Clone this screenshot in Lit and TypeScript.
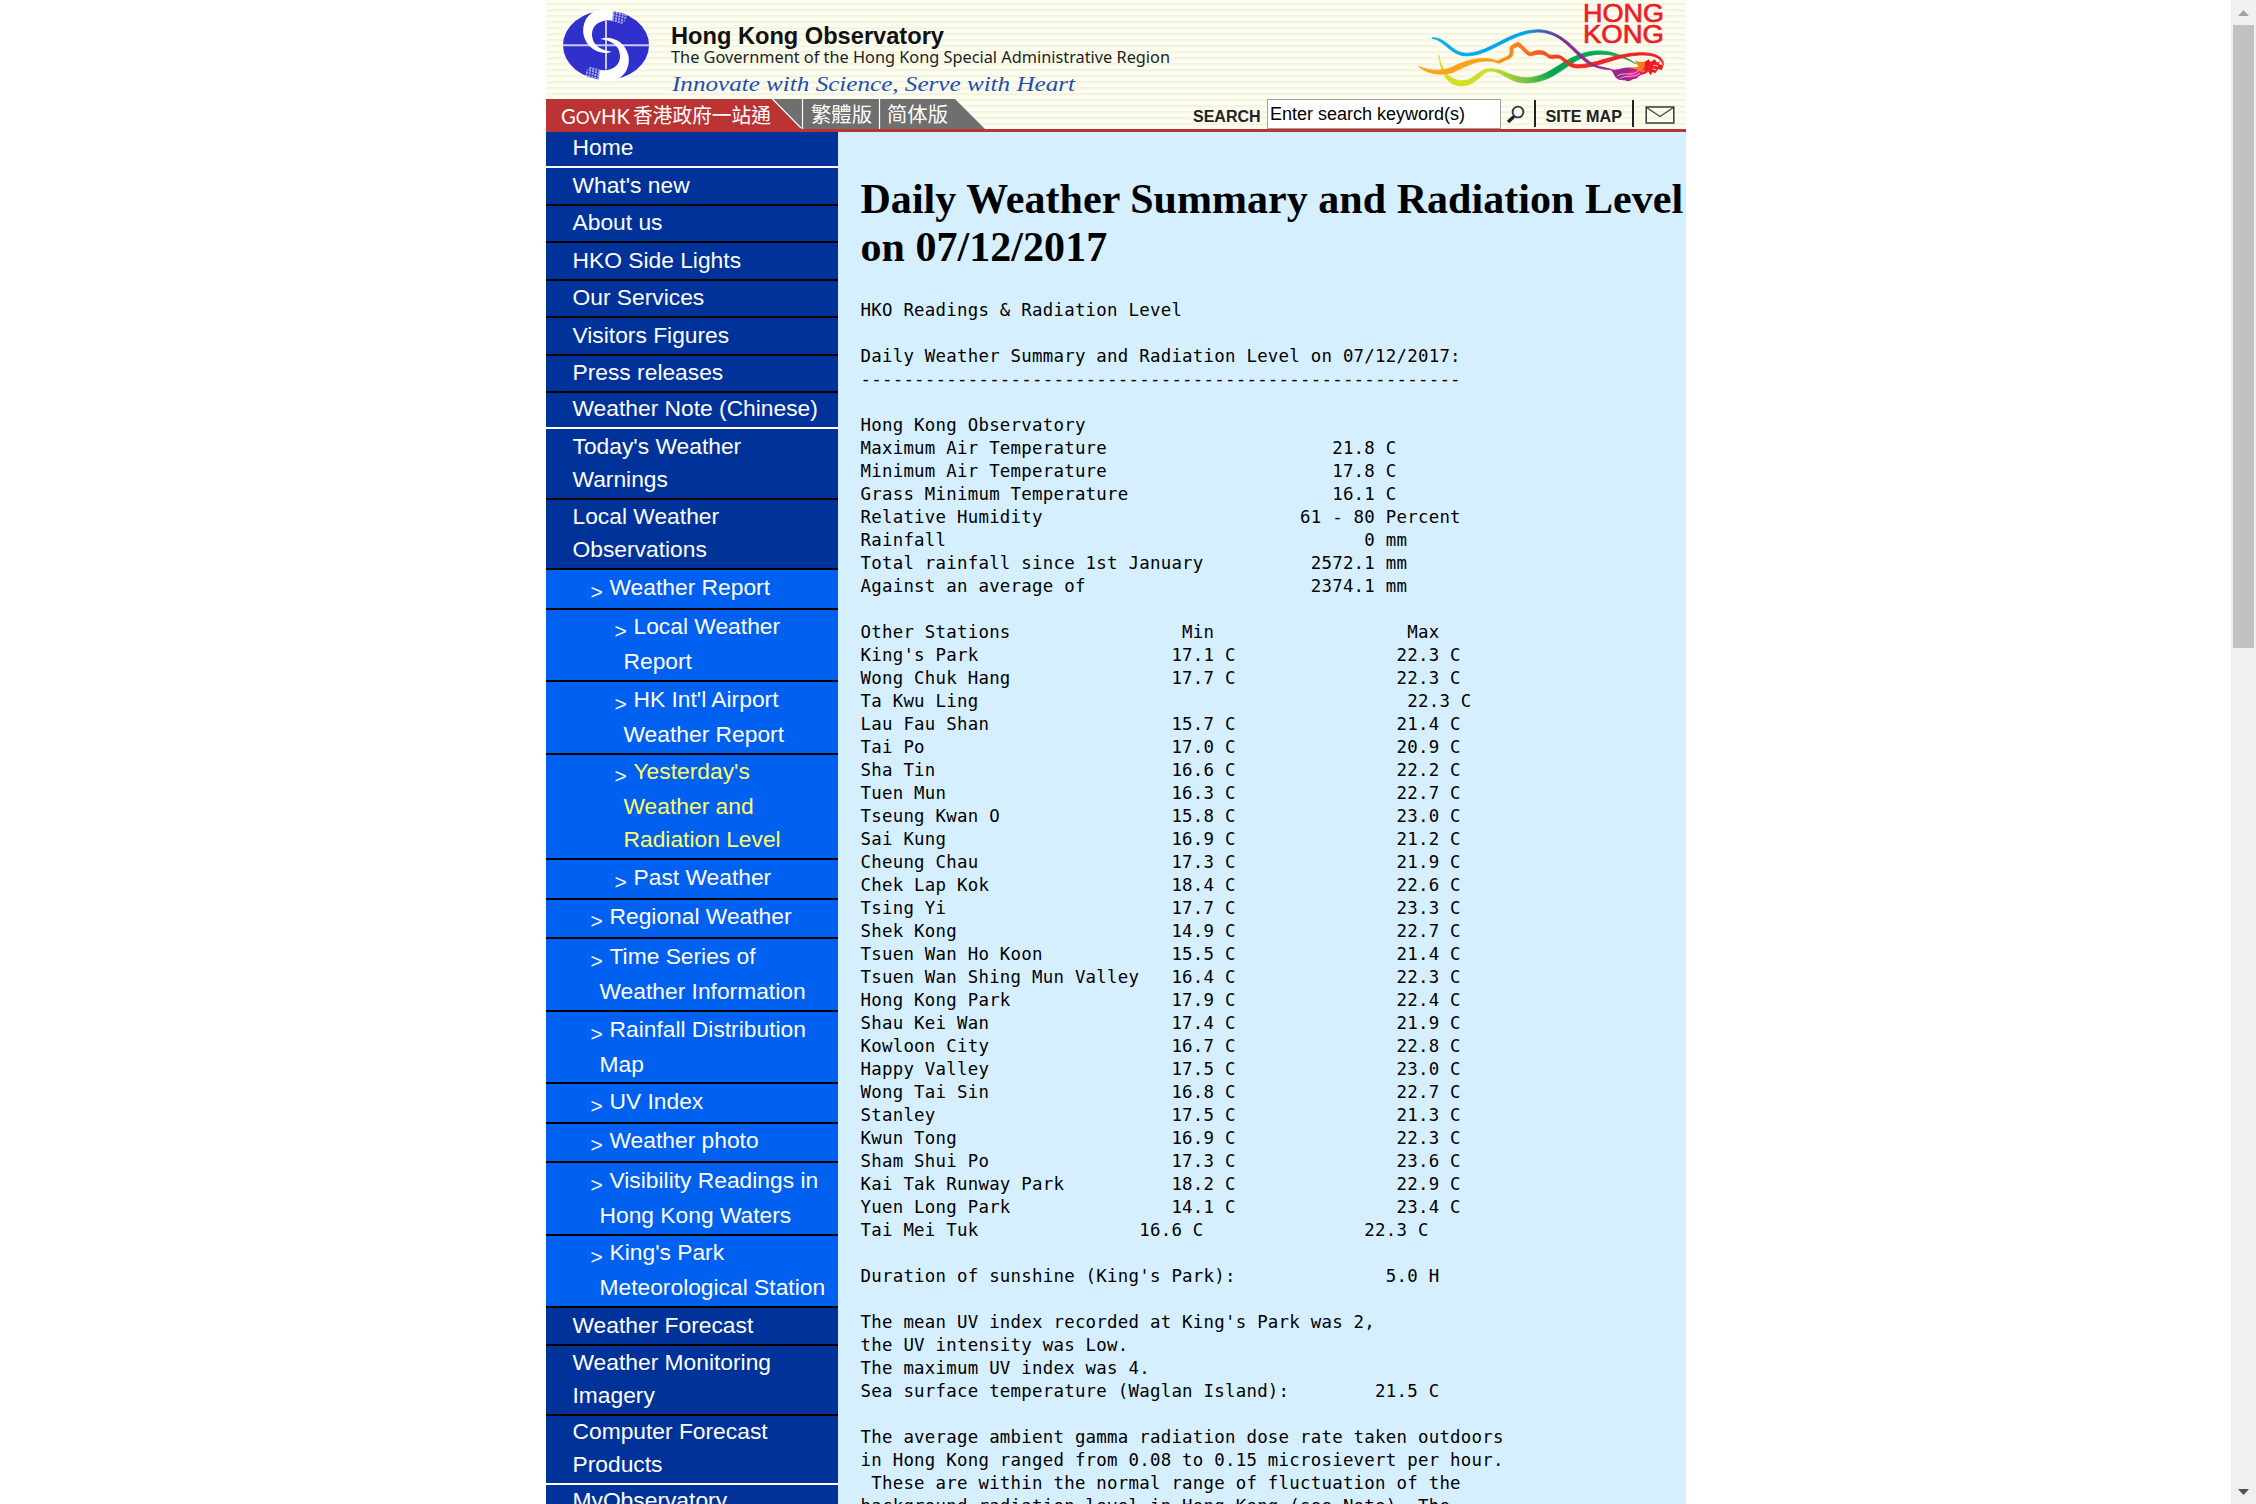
import { LitElement, html, svg, css } from "lit";
import { customElement } from "lit/decorators.js";
import { classMap } from "lit/directives/class-map.js";
import { styleMap } from "lit/directives/style-map.js";

interface NavItem {
  lines: string[];
  height: number;
  // space above the first line of text
  pad: number;
  level: 0 | 1 | 2;
  current?: boolean;
  // white rule closes a section, black rule separates entries
  sectionEnd?: boolean;
}

const item = (
  lines: string[],
  height: number,
  pad: number,
  level: 0 | 1 | 2 = 0,
  extra: Partial<NavItem> = {},
): NavItem => ({ lines, height, pad, level, ...extra });

const NAV: NavItem[] = [
  item(["Home"], 36, 0, 0, { sectionEnd: true }),
  item(["What's new"], 38, 2),
  item(["About us"], 37, 1),
  item(["HKO Side Lights"], 38, 2),
  item(["Our Services"], 37, 1),
  item(["Visitors Figures"], 38, 2),
  item(["Press releases"], 37, 1),
  item(["Weather Note (Chinese)"], 36, 0, 0, { sectionEnd: true }),
  item(["Today's Weather", "Warnings"], 71, 2),
  item(["Local Weather", "Observations"], 70, 1),
  item(["Weather Report"], 40, 2, 1),
  item(["Local Weather", "Report"], 72, 1, 2),
  item(["HK Int'l Airport", "Weather Report"], 73, 2, 2),
  item(["Yesterday's", "Weather and", "Radiation Level"], 105, 1, 2, { current: true }),
  item(["Past Weather"], 40, 2, 2),
  item(["Regional Weather"], 39, 1, 1),
  item(["Time Series of", "Weather Information"], 73, 2, 1),
  item(["Rainfall Distribution", "Map"], 72, 2, 1),
  item(["UV Index"], 40, 2, 1),
  item(["Weather photo"], 39, 1, 1),
  item(["Visibility Readings in", "Hong Kong Waters"], 73, 2, 1),
  item(["King's Park", "Meteorological Station"], 72, 1, 1),
  item(["Weather Forecast"], 38, 2),
  item(["Weather Monitoring", "Imagery"], 70, 1),
  item(["Computer Forecast", "Products"], 69, 0, 0, { sectionEnd: true }),
  item(["MyObservatory"], 38, 0),
];

// Places each text at its character column.
const cols = (...parts: [number, string][]) =>
  parts.reduce((line, [col, text]) => line.padEnd(col) + text, "");

const STATIONS: [string, string, string][] = [
  ["King's Park", "17.1", "22.3"],
  ["Wong Chuk Hang", "17.7", "22.3"],
  ["Ta Kwu Ling", "", "22.3"],
  ["Lau Fau Shan", "15.7", "21.4"],
  ["Tai Po", "17.0", "20.9"],
  ["Sha Tin", "16.6", "22.2"],
  ["Tuen Mun", "16.3", "22.7"],
  ["Tseung Kwan O", "15.8", "23.0"],
  ["Sai Kung", "16.9", "21.2"],
  ["Cheung Chau", "17.3", "21.9"],
  ["Chek Lap Kok", "18.4", "22.6"],
  ["Tsing Yi", "17.7", "23.3"],
  ["Shek Kong", "14.9", "22.7"],
  ["Tsuen Wan Ho Koon", "15.5", "21.4"],
  ["Tsuen Wan Shing Mun Valley", "16.4", "22.3"],
  ["Hong Kong Park", "17.9", "22.4"],
  ["Shau Kei Wan", "17.4", "21.9"],
  ["Kowloon City", "16.7", "22.8"],
  ["Happy Valley", "17.5", "23.0"],
  ["Wong Tai Sin", "16.8", "22.7"],
  ["Stanley", "17.5", "21.3"],
  ["Kwun Tong", "16.9", "22.3"],
  ["Sham Shui Po", "17.3", "23.6"],
  ["Kai Tak Runway Park", "18.2", "22.9"],
  ["Yuen Long Park", "14.1", "23.4"],
];

const REPORT = [
  "HKO Readings & Radiation Level",
  "",
  "Daily Weather Summary and Radiation Level on 07/12/2017:",
  "-".repeat(56),
  "",
  "Hong Kong Observatory",
  cols([0, "Maximum Air Temperature"], [44, "21.8 C"]),
  cols([0, "Minimum Air Temperature"], [44, "17.8 C"]),
  cols([0, "Grass Minimum Temperature"], [44, "16.1 C"]),
  cols([0, "Relative Humidity"], [41, "61 - 80 Percent"]),
  cols([0, "Rainfall"], [47, "0 mm"]),
  cols([0, "Total rainfall since 1st January"], [42, "2572.1 mm"]),
  cols([0, "Against an average of"], [42, "2374.1 mm"]),
  "",
  cols([0, "Other Stations"], [30, "Min"], [51, "Max"]),
  ...STATIONS.map(([name, min, max]) =>
    min ? cols([0, name], [29, `${min} C`], [50, `${max} C`]) : cols([0, name], [51, `${max} C`]),
  ),
  cols([0, "Tai Mei Tuk"], [26, "16.6 C"], [47, "22.3 C"]),
  "",
  cols([0, "Duration of sunshine (King's Park):"], [49, "5.0 H"]),
  "",
  "The mean UV index recorded at King's Park was 2,",
  "the UV intensity was Low.",
  "The maximum UV index was 4.",
  cols([0, "Sea surface temperature (Waglan Island):"], [48, "21.5 C"]),
  "",
  "The average ambient gamma radiation dose rate taken outdoors",
  "in Hong Kong ranged from 0.08 to 0.15 microsievert per hour.",
  " These are within the normal range of fluctuation of the",
  "background radiation level in Hong Kong (see Note). The",
].join("\n");

@customElement("hko-banner")
export class HkoBanner extends LitElement {
  static styles = css`
    :host {
      display: block;
      height: 132px;
      box-sizing: border-box;
      border-bottom: 3px solid #bb3333;
      background: repeating-linear-gradient(#fefeee 0 3px, #f4f4e4 3px 5px, #fafaea 5px 6px);
      font-family: "Liberation Sans", Arial, sans-serif;
    }
    .brand { display: block; width: 1140px; height: 99px; }
    .name { font: bold 23px "Liberation Sans", sans-serif; fill: #111; }
    .gov { font: 16.5px "Noto Sans", sans-serif; fill: #222; }
    .motto { font: italic 20px "Liberation Serif", serif; fill: #1f4fae; }
    .city { font: 26px "Liberation Sans", sans-serif; fill: #ee1c25; stroke: #ee1c25; stroke-width: 0.7px; }
    .bar { display: flex; height: 30px; }
    .tabs { display: block; width: 450px; height: 30px; flex: none; }
    .tab { font: 20px "Noto Sans CJK TC", sans-serif; fill: #fff; }
    .latin { font: 21px Lato, sans-serif; fill: #fff; }
    .simplified { font-family: "Noto Sans CJK SC", sans-serif; }
    .tools { display: flex; flex: 1; padding-left: 197px; }
    .tools > * { flex: none; }
    .label { font-size: 16px; line-height: 18px; font-weight: bold; color: #222; padding-top: 8px; white-space: nowrap; }
    .search { width: 74px; padding-top: 9px; }
    .field {
      box-sizing: border-box;
      width: 234px;
      height: 30px;
      border: 1.5px solid #a0a0a0;
      background: #fff;
      padding-left: 2px;
      font-size: 18px;
      line-height: 28px;
      color: #000;
      white-space: nowrap;
    }
    .lens { width: 19px; height: 20px; margin: 6px 9px 0 5px; }
    .rule { width: 1.5px; height: 27px; margin-top: 1px; background: #222; }
    .map { width: 96.5px; padding-left: 10px; box-sizing: border-box; font-size: 16.2px; }
    .mail { width: 30px; height: 19px; margin: 7px 0 0 11px; }
  `;

  private swirl() {
    return svg`
      <path fill="#fff" d="M202 31C165 22 135 33 120 58C103 90 112 124 138 145C156 159 180 162 197 155C168 151 139 138 138 105C137 80 155 63 185 61L200 62Z"/>
      <path fill="none" stroke="#aaaaf4" stroke-width="6" stroke-dasharray="6 3" d="M201 36L243 47M200 44L240 55M199 52L236 63M198 60L230 69"/>
    `;
  }

  private dragon() {
    return svg`
      <defs>
        <linearGradient id="blue" gradientUnits="userSpaceOnUse" x1="66" y1="0" x2="605" y2="0">
          <stop offset="0" stop-color="#00aeef"/><stop offset="0.52" stop-color="#00a4e8"/>
          <stop offset="0.62" stop-color="#3f5fb0"/><stop offset="0.72" stop-color="#7a2e91"/><stop offset="1" stop-color="#a0228f"/>
        </linearGradient>
        <linearGradient id="green" gradientUnits="userSpaceOnUse" x1="86" y1="0" x2="680" y2="0">
          <stop offset="0" stop-color="#d7df23"/><stop offset="0.25" stop-color="#cfdc28"/>
          <stop offset="0.44" stop-color="#7ac143"/><stop offset="0.58" stop-color="#00a651"/><stop offset="1" stop-color="#12a85a"/>
        </linearGradient>
        <linearGradient id="fire" gradientUnits="userSpaceOnUse" x1="26" y1="0" x2="760" y2="0">
          <stop offset="0" stop-color="#faa61a"/><stop offset="0.3" stop-color="#f9a01b"/>
          <stop offset="0.42" stop-color="#f47b20"/><stop offset="0.6" stop-color="#ee2e24"/><stop offset="1" stop-color="#ed1c24"/>
        </linearGradient>
      </defs>
      <path fill="url(#green)" stroke="url(#green)" stroke-width="2.5" d="M86 165C93 200 112 241 156 242C195 242 203 207 240 206C280 206 305 233 350 233C412 233 450 185 505 165C560 143 615 150 678 191C615 158 560 156 515 174C460 200 425 249 347 249C300 249 275 213 242 213C215 214 200 258 154 258C105 256 92 210 86 165Z"/>
      <path fill="url(#fire)" stroke="url(#fire)" stroke-width="2.5" d="M26 199C60 213 95 215 125 202C165 182 215 165 264 183C275 175 290 172 298 165C303 154 296 143 304 137C312 133 318 129 324 127C338 132 344 150 362 158C376 151 398 147 413 161C421 169 430 163 446 166C464 170 470 190 500 194C550 196 610 160 690 158C735 158 762 170 760 195C750 168 725 165 690 165C620 168 560 206 500 204C468 202 460 175 444 174C430 174 420 180 410 169C395 158 378 163 360 168C342 162 335 143 323 139C316 145 308 142 309 150C311 160 307 170 299 176C288 178 278 186 267 190C215 170 170 198 127 218C90 226 55 225 26 199Z"/>
      <path fill="url(#blue)" stroke="url(#blue)" stroke-width="2.5" d="M66 113C112 111 122 160 172 160C240 158 300 89 385 89C470 92 505 172 558 196C575 203 590 203 606 209C590 210 565 206 545 196C490 170 465 97 383 96C305 98 240 168 170 168C120 167 105 120 66 115Z"/>
      <path fill="#a0228f" d="M600 206C622 216 640 198 668 204C690 206 695 214 714 215C700 226 690 220 680 236C670 232 664 246 650 243C640 238 632 244 622 236C612 230 612 218 600 206Z"/>
      <path fill="#e01a8c" d="M655 214C675 206 690 214 712 216C698 226 688 222 680 234C670 230 660 238 650 236Z"/>
      <path fill="none" stroke="#fdfdee" stroke-width="2" d="M622 228C645 214 660 230 684 214M630 236C650 222 668 236 690 220"/>
      <path fill="#f47b20" d="M674 180C690 190 700 184 712 186L716 212C702 220 694 214 680 214C690 208 672 208 656 205C670 200 684 203 686 198C680 196 680 188 674 180Z"/>
      <path fill="#ed1c24" d="M704 186L716 178L722 186L734 178L742 188L752 182L746 192L760 196L756 210L744 208L736 220L728 216L722 226L714 214L700 224L706 208L696 212L704 200Z"/>
      <path fill="none" stroke="#fdf3d0" stroke-width="2.5" d="M730 196L744 198M728 206L738 210"/>
    `;
  }

  render() {
    return html`
      <svg class="brand" viewBox="0 0 1140 99">
        <g transform="scale(0.33333)">
          <ellipse cx="180" cy="136" rx="129" ry="104" fill="#3030cc"/>
          <path stroke="#c8c8fa" stroke-width="6" d="M51 136H309M180 62V208"/>
          ${this.swirl()}
          <g transform="rotate(180 180 136)">${this.swirl()}</g>
        </g>
        <text class="name" x="125" y="43.5" textLength="273" lengthAdjust="spacingAndGlyphs">Hong Kong Observatory</text>
        <text class="gov" x="125" y="63.3" textLength="499" lengthAdjust="spacingAndGlyphs">The Government of the Hong Kong Special Administrative Region</text>
        <text class="motto" x="126" y="91" textLength="403" lengthAdjust="spacingAndGlyphs">Innovate with Science, Serve with Heart</text>
        <g transform="translate(864 0) scale(0.33333)">${this.dragon()}</g>
        <text class="city" x="1037" y="21.8" textLength="81" lengthAdjust="spacingAndGlyphs">HONG</text>
        <text class="city" x="1037" y="42.8" textLength="81" lengthAdjust="spacingAndGlyphs">KONG</text>
      </svg>
      <div class="bar">
        <svg class="tabs" viewBox="0 0 450 30">
          <path fill="#6f6f6f" d="M225 0H409L439 30H225Z"/>
          <path fill="#bb3333" d="M0 0H226L255 30H0Z"/>
          <path fill="none" stroke="#fff" stroke-width="1.2" d="M226.5 0L255 29M256.5 0V30M333.5 0V30"/>
          <text class="latin" x="15" y="24.5" textLength="69" lengthAdjust="spacingAndGlyphs">G<tspan font-size="18">OV</tspan>HK</text>
          <text class="tab" x="87" y="23.5" textLength="138" lengthAdjust="spacingAndGlyphs">香港政府一站通</text>
          <text class="tab" x="265" y="23" textLength="61" lengthAdjust="spacingAndGlyphs">繁體版</text>
          <text class="tab simplified" x="341" y="23" textLength="61" lengthAdjust="spacingAndGlyphs">简体版</text>
        </svg>
        <div class="tools">
          <span class="label search">SEARCH</span>
          <div class="field">Enter search keyword(s)</div>
          <svg class="lens" viewBox="0 0 19 20">
            <circle cx="12" cy="7" r="5.4" fill="#f4f4f4" stroke="#333" stroke-width="1.8"/>
            <path d="M8 11.5L2 17" stroke="#222" stroke-width="3.2"/>
          </svg>
          <div class="rule"></div>
          <span class="label map">SITE MAP</span>
          <div class="rule"></div>
          <svg class="mail" viewBox="0 0 30 19">
            <rect x="1.2" y="1" width="27.6" height="16" fill="none" stroke="#444" stroke-width="1.6"/>
            <path d="M1.5 1.5L15 10.5L28.5 1.5" fill="none" stroke="#444" stroke-width="1.3"/>
          </svg>
        </div>
      </div>
    `;
  }
}

@customElement("hko-nav")
export class HkoNav extends LitElement {
  static styles = css`
    :host {
      display: block;
      width: 292px;
      flex: none;
      font: 22.8px/31px "Liberation Sans", Arial, sans-serif;
      color: #fff;
    }
    .item {
      box-sizing: border-box;
      padding-left: 26.5px;
      border-bottom: 2px solid #000;
      background: #003399;
      white-space: nowrap;
      overflow: hidden;
    }
    .end { border-bottom-color: #fff; }
    .sub { background: #0060f0; padding-left: 53.5px; }
    .deep { padding-left: 77.5px; }
    .line { height: 33px; }
    .lead { display: flex; margin-left: -9px; }
    .wrapped { height: 35px; }
    .mark { width: 19px; padding-top: 4px; font-size: 21px; }
    .current { color: #ffff66; }
  `;

  render() {
    return NAV.map((n) => {
      const sub = n.level > 0;
      return html`
        <div
          class=${classMap({ item: true, sub, deep: n.level === 2, end: !!n.sectionEnd })}
          style=${styleMap({ height: `${n.height}px`, paddingTop: `${n.pad}px` })}
        >
          ${n.lines.map(
            (text, i) => html`<div
              class=${classMap({
                line: true,
                lead: sub && i === 0,
                wrapped: sub && i === 0 && n.lines.length > 1,
              })}
            >${sub && i === 0 ? html`<span class="mark">&gt;</span>` : ""}<span
                class=${classMap({ current: !!n.current })}
                >${text}</span></div>`,
          )}
        </div>
      `;
    });
  }
}

@customElement("app-root")
export class AppRoot extends LitElement {
  static styles = css`
    :host {
      display: flex;
      height: 1504px;
      overflow: hidden;
      background: #fff;
    }
    .view { flex: 1; overflow: hidden; }
    .page { width: 1140px; margin-left: 546px; }
    .body { display: flex; height: 1372px; overflow: hidden; }
    .content {
      flex: 1;
      padding-left: 22.5px;
      background: #d6efff;
      color: #000;
      overflow: hidden;
    }
    .title {
      margin: 43px -6px 0 0;
      font: bold 42px/48px "Liberation Serif", "Times New Roman", serif;
      letter-spacing: 0.04px;
    }
    .report {
      margin: 28px 0 0;
      font: 17.4px/23px "DejaVu Sans Mono", monospace;
      letter-spacing: 0.25px;
      white-space: pre;
    }
    .scroll {
      display: flex;
      flex-direction: column;
      align-items: center;
      width: 25px;
      background: #f0f0f0;
    }
    .arrow { display: block; width: 25px; height: 25px; }
    .thumb { width: 21px; height: 623px; background: #c1c1c1; margin-bottom: auto; }
  `;

  render() {
    return html`
      <div class="view">
        <div class="page">
          <hko-banner></hko-banner>
          <div class="body">
            <hko-nav></hko-nav>
            <div class="content">
              <h1 class="title">Daily Weather Summary and Radiation Level on 07/12/2017</h1>
              <pre class="report">${REPORT}</pre>
            </div>
          </div>
        </div>
      </div>
      <div class="scroll">
        <svg class="arrow" viewBox="0 0 25 25"><path fill="#a3a3a3" d="M7 16L12.5 10L18 16Z"/></svg>
        <div class="thumb"></div>
        <svg class="arrow" viewBox="0 0 25 25"><path fill="#505050" d="M7 10L12.5 16L18 10Z"/></svg>
      </div>
    `;
  }
}
